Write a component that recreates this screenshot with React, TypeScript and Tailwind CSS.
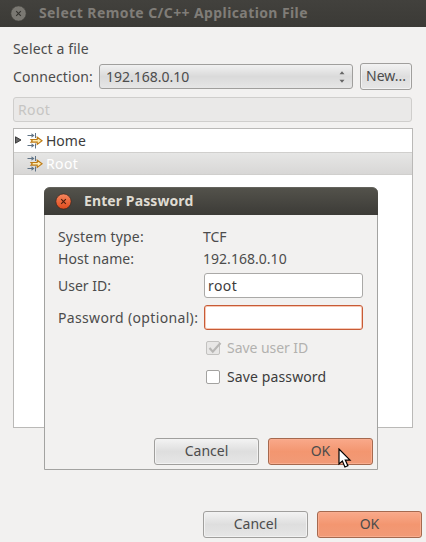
import type { ReactNode } from 'react';

function CloseButton({ active = false }: { active?: boolean }) {
  return (
    <svg width="17" height="17" viewBox="0 0 17 17" className="shrink-0">
      <defs>
        <linearGradient id="closeActive" x1="0" y1="0" x2="0" y2="1">
          <stop offset="0" stopColor="#f6875f" />
          <stop offset="1" stopColor="#df4a1c" />
        </linearGradient>
      </defs>
      <circle cx="8.5" cy="8.5" r="7.6" fill={active ? 'url(#closeActive)' : '#7a7872'} stroke={active ? '#3a2018' : '#45443f'} strokeWidth="0.6" />
      <path d="M6.2 6.2l4.6 4.6M10.8 6.2l-4.6 4.6" stroke={active ? '#4a1c0c' : '#33322e'} strokeWidth="1.1" />
    </svg>
  );
}

function FilterIcon() {
  return (
    <svg width="16" height="16" viewBox="0 0 16 16" className="shrink-0">
      <g fill="none" stroke="#5f7386" strokeWidth="1">
        <path d="M0.5 2.5h5M0.5 12.5h6M8.5 0v5M8.5 10.5v5" />
      </g>
      <path d="M4.5 0.3L7.5 2.5L4.5 4.7zM4.5 10.3L7.5 12.5L4.5 14.7z" fill="#5f7386" />
      <path d="M4 6.5h6.2v-2.3l4.9 3.6l-4.9 3.6v-2.3h-6.2l1.2-1.3z" fill="#fdebb0" stroke="#bd7a14" strokeWidth="1.1" />
    </svg>
  );
}

function Button({ children, primary = false, className = '' }: { children: ReactNode; primary?: boolean; className?: string }) {
  const tone = primary
    ? 'border-[#a5694f] bg-linear-to-b from-[#f9a98a] via-[#f39670] to-[#f19a77] shadow-[inset_0_0_0_1px_#f9ad8f]'
    : 'border-[#a09f9d] bg-linear-to-b from-[#f3f3f3] via-[#dedede] to-[#e6e6e6] shadow-[inset_0_0_0_1px_#f2f2f2]';
  return (
    <button className={`flex h-[27px] items-center justify-center rounded-[3px] border pb-px ${tone} ${className}`}>{children}</button>
  );
}

function Pointer() {
  return (
    <svg width="14" height="21" viewBox="0 0 14 21" className="absolute left-[293px] top-[260px]">
      <path d="M1 1v15l3.4-3l2.5 6l3-1.3l-2.6-5.6h4.7z" fill="#fff" stroke="#000" strokeWidth="1.2" />
    </svg>
  );
}

function PasswordDialog() {
  return (
    <div className="absolute left-[44px] top-[187px] h-[283px] w-[334px] rounded-t-[6px] border border-[#a3a3a1] bg-[#f2f1f0]">
      <header className="-mx-px -mt-px flex h-[28px] items-center rounded-t-[6px] border-t border-[#64635d] bg-linear-to-b from-[#53524b] to-[#3c3b37] pl-[11px]">
        <CloseButton active />
        <h2 className="-mt-px ml-[12px] text-[14px] font-bold tracking-[0.1px] text-[#dfdbd2]">Enter Password</h2>
      </header>
      <div className="grid grid-cols-[146px_159px] grid-rows-[22px_22px_32px_32px] items-center pl-[13px] pt-[11px]">
        <span className="tracking-[0.18px]">System type:</span>
        <span className="-ml-px">TCF</span>
        <span className="tracking-[0.06px]">Host name:</span>
        <span className="-ml-px tracking-[0.03px]">192.168.0.10</span>
        <span>User ID:</span>
        <div className="-mt-px flex h-[25px] items-center rounded-[3px] border border-[#aaa9a7] bg-white pl-[3px] tracking-[0.4px] text-[#3c3c3c]">root</div>
        <span className="whitespace-nowrap tracking-[0.34px]">Password (optional):</span>
        <div className="-mt-px h-[25px] rounded-[3px] border border-[#c75b36] bg-white shadow-[inset_0_0_0_1px_#f7c8b5]" />
      </div>
      <div className="-mt-px ml-[161px] flex h-[29px] items-center text-[#b2b1af]">
        <span className="mr-[7px] h-[14px] w-[14px] rounded-[2px] border border-[#c3c2c0] bg-[#e8e7e6]">
          <svg width="16" height="14" viewBox="0 0 16 14" className="block overflow-visible">
            <path d="M2.5 6l3.3 3.7L13.5 1" fill="none" stroke="#b8b7b5" strokeWidth="2.2" />
          </svg>
        </span>
        <span className="-tracking-[0.05px]">Save user ID</span>
      </div>
      <div className="ml-[161px] flex h-[29px] items-center text-[#3c3c3c]">
        <span className="mr-[7px] h-[14px] w-[14px] rounded-[2px] border border-[#a3a2a0] bg-white" />
        <span className="tracking-[0.12px]">Save password</span>
      </div>
      <div className="mt-[47px] flex gap-[9px] pl-[109px]">
        <Button className="w-[105px]">Cancel</Button>
        <Button primary className="w-[105px]">OK</Button>
      </div>
      <Pointer />
    </div>
  );
}

export default function App() {
  return (
    <main className="relative flex h-[542px] w-[426px] flex-col overflow-hidden bg-[#f2f1f0] font-['Noto_Sans','Open_Sans',sans-serif] text-[14px] leading-[20px] text-[#4c4c4c]">
      <header className="flex h-[27px] shrink-0 items-center bg-linear-to-b from-[#42413d] to-[#3b3a36] pl-[10px]">
        <CloseButton />
        <h1 className="-mt-px ml-[12px] whitespace-nowrap text-[14px] font-bold tracking-[0.4px] text-[#807d78]">Select Remote C/C++ Application File</h1>
      </header>
      <div className="ml-[13px] mt-[12px] tracking-[0.15px]">Select a file</div>
      <div className="mt-[4px] flex h-[27px] items-center pl-[13px]">
        <span className="w-[86px] tracking-[0.1px]">Connection:</span>
        <div className="flex h-[25px] w-[254px] items-center justify-between rounded-[3px] border border-[#a09f9d] bg-linear-to-b from-[#f1f1f1] via-[#dadada] to-[#e6e6e6] pl-[6px] pr-[7px]">
          <span>192.168.0.10</span>
          <svg width="6" height="12" viewBox="0 0 6 12">
            <path d="M0.5 3.2L3 0.3L5.5 3.2zM0.5 8.8L3 11.7L5.5 8.8z" fill="#666" />
          </svg>
        </div>
        <Button className="ml-[7px] w-[52px]">New...</Button>
      </div>
      <div className="ml-[13px] mt-[7px] flex h-[25px] w-[399px] items-center rounded-[3px] border border-[#cfcecc] bg-[#eae9e8] pl-[4px] tracking-[0.4px] text-[#c6c5c3]">Root</div>
      <div className="ml-[13px] mt-[6px] h-[300px] w-[400px] border border-[#bab9b7] bg-white">
        <div className="flex h-[23px] items-center pl-[1px] text-[#3c3c3c]">
          <svg width="7" height="9" viewBox="0 0 7 9" className="mr-[5px]">
            <path d="M0.5 0.8L6 4L0.5 7.2z" fill="#666" stroke="#333" strokeWidth="0.9" />
          </svg>
          <FilterIcon />
          <span className="ml-[3px]">Home</span>
        </div>
        <div className="flex h-[23px] items-center border-b border-t border-[#d0cfcd] bg-linear-to-b from-[#e6e6e5] to-[#d8d7d6] pl-[13px] text-white">
          <FilterIcon />
          <span className="ml-[3px] tracking-[0.4px]">Root</span>
        </div>
      </div>
      <div className="mt-[83px] flex gap-[9px] pl-[203px]">
        <Button className="w-[105px]">Cancel</Button>
        <Button primary className="w-[105px]">OK</Button>
      </div>
      <PasswordDialog />
    </main>
  );
}
